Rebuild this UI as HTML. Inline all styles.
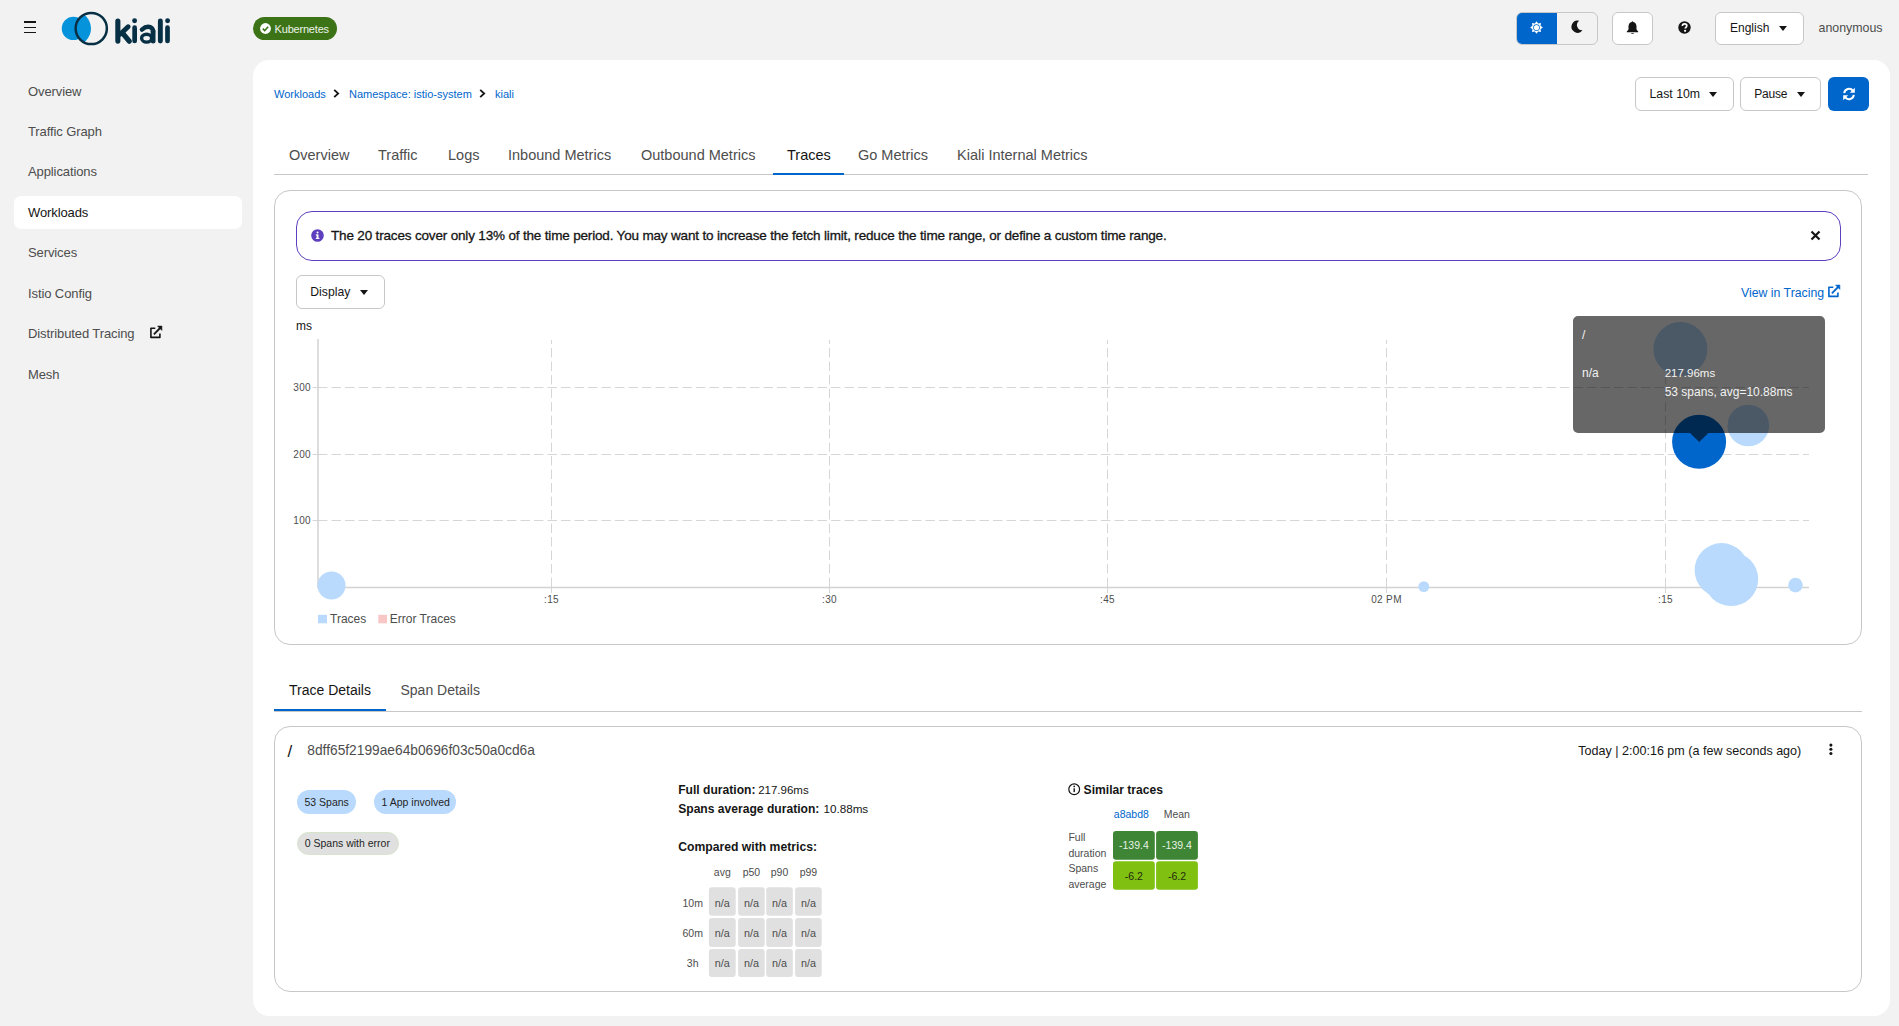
<!DOCTYPE html>
<html><head><meta charset="utf-8">
<style>
*{box-sizing:border-box;margin:0;padding:0}
html,body{width:1899px;height:1026px;overflow:hidden}
body{background:#f2f2f2;font-family:"Liberation Sans",sans-serif;color:#151515;position:relative}
.a{position:absolute;white-space:nowrap}
.nav{position:absolute;left:28px;font-size:13px;color:#4d4d4d;letter-spacing:-0.1px;margin-top:-0.5px}
.panel{position:absolute;left:253px;top:60px;width:1637px;height:956px;background:#fff;border-radius:16px}
.crumb{position:absolute;top:88px;font-size:11px;color:#0066cc}
.chev{position:absolute;top:89px}
.tab{position:absolute;top:146.5px;font-size:14.5px;color:#4d4d4d}
.btn{position:absolute;border:1px solid #c7c7c7;border-radius:6px;background:#fff}
.caret{position:absolute;width:0;height:0;border-left:4.5px solid transparent;border-right:4.5px solid transparent;border-top:5px solid #151515}
</style></head>
<body>
<!-- header -->
<div class="a" style="left:24px;top:21.3px;width:12px;height:1.4px;background:#151515"></div>
<div class="a" style="left:24px;top:26.8px;width:12px;height:1.4px;background:#151515"></div>
<div class="a" style="left:24px;top:31.8px;width:12px;height:1.4px;background:#151515"></div>
<svg class="a" style="left:0;top:0" width="200" height="56" viewBox="0 0 200 56">
  <defs><clipPath id="rc"><circle cx="91.25" cy="28.5" r="15.6"/></clipPath></defs>
  <circle cx="73.4" cy="28.45" r="11.65" fill="#0593dc"/>
  <circle cx="73.7" cy="28.5" r="17.3" fill="#0593dc" clip-path="url(#rc)"/>
  <circle cx="91.25" cy="28.5" r="15.6" fill="none" stroke="#073045" stroke-width="2.5"/>
  <g stroke="#073045" stroke-linecap="round" fill="none">
    <path d="M117.85 21V41.1" stroke-width="5.1"/>
    <path d="M120.2 34.2L128.1 26.8" stroke-width="5"/>
    <path d="M122.6 33.2L129.2 41.2" stroke-width="5.2"/>
    <path d="M134.65 27.7V41" stroke-width="4.7"/>
    <path d="M153.1 31V41.2" stroke-width="4.8"/>
    <path d="M141.9 29.6Q146.5 25.6 150.8 27.4Q153.1 28.6 153.1 32" stroke-width="4.4"/>
    <ellipse cx="146.6" cy="38.2" rx="5" ry="3.9" stroke-width="3.4"/>
    <path d="M160.35 21V41.1" stroke-width="4.9"/>
    <path d="M167.5 27.7V41" stroke-width="4.7"/>
  </g>
  <circle cx="134.6" cy="20.8" r="2.45" fill="#073045"/>
  <circle cx="167.6" cy="20.8" r="2.45" fill="#073045"/>
</svg>
<div class="a" id="k8s" style="left:253px;top:17px;width:84px;height:23px;border-radius:12px;background:#3d7317"></div>
<svg class="a" style="left:259px;top:22px" width="13" height="13" viewBox="0 0 13 13"><circle cx="6.5" cy="6.5" r="5.4" fill="#fff"/><path d="M3.8 6.6 L5.7 8.5 L9.2 4.8" fill="none" stroke="#3d7317" stroke-width="1.6"/></svg>
<div class="a" id="k8stxt" style="left:274.6px;top:22.5px;font-size:11px;color:#eef3ea;letter-spacing:-0.2px">Kubernetes</div>

<!-- theme toggle -->
<div class="a" style="left:1515.5px;top:12px;width:82px;height:33px;border:1px solid #c7c7c7;border-radius:6px;background:#f2f2f2;overflow:hidden">
  <div style="position:absolute;left:-1px;top:-1px;width:41.4px;height:33px;background:#0066cc"></div>
</div>
<div class="btn" style="left:1612px;top:12px;width:41px;height:33px"></div>
<div class="btn" style="left:1715px;top:12px;width:89px;height:33px"></div>
<div class="a" id="eng" style="left:1730px;top:20.5px;font-size:12px">English</div>
<div class="caret" style="left:1779.3px;top:25.6px"></div>
<div class="a" id="anon" style="left:1818.5px;top:20.5px;font-size:12.4px;color:#4d4d4d">anonymous</div>

<!-- sidebar -->
<div class="nav" id="n1" style="top:84px">Overview</div>
<div class="nav" style="top:124px">Traffic Graph</div>
<div class="nav" style="top:164px">Applications</div>
<div class="a" style="left:14px;top:196px;width:228px;height:33px;background:#fff;border-radius:7px"></div>
<div class="nav" style="top:205px;color:#151515">Workloads</div>
<div class="nav" style="top:245px">Services</div>
<div class="nav" style="top:286px">Istio Config</div>
<div class="nav" style="top:326px">Distributed Tracing</div>
<div class="nav" style="top:367px">Mesh</div>

<!-- main panel -->
<div class="panel"></div>
<div class="crumb" id="c1" style="left:274px">Workloads</div>
<div class="crumb" style="left:349px">Namespace: istio-system</div>
<div class="crumb" style="left:495px">kiali</div>

<div class="tab" style="left:289px">Overview</div>
<div class="tab" style="left:378px">Traffic</div>
<div class="tab" style="left:448px">Logs</div>
<div class="tab" style="left:508px">Inbound Metrics</div>
<div class="tab" style="left:641px">Outbound Metrics</div>
<div class="tab" style="left:787px;color:#151515">Traces</div>
<div class="tab" style="left:858px">Go Metrics</div>
<div class="tab" style="left:957px">Kiali Internal Metrics</div>
<div class="a" style="left:274px;top:174px;width:1594px;height:1px;background:#c7c7c7"></div>
<div class="a" style="left:772.5px;top:172.8px;width:71px;height:2.2px;background:#0066cc"></div>

<!-- card -->
<div class="a" style="left:274px;top:190px;width:1588px;height:455px;border:1px solid #c7c7c7;border-radius:16px"></div>


<!-- breadcrumb chevrons -->
<svg class="a" style="left:333px;top:89px" width="7" height="9" viewBox="0 0 7 9"><path d="M1.2 0.8 L5.2 4.5 L1.2 8.2" fill="none" stroke="#151515" stroke-width="1.8"/></svg>
<svg class="a" style="left:479px;top:89px" width="7" height="9" viewBox="0 0 7 9"><path d="M1.2 0.8 L5.2 4.5 L1.2 8.2" fill="none" stroke="#151515" stroke-width="1.8"/></svg>

<!-- right toolbar -->
<div class="btn" style="left:1635px;top:77px;width:99px;height:34px"></div>
<div class="a" id="last" style="left:1649.5px;top:86.5px;font-size:12.3px">Last 10m</div>
<div class="caret" style="left:1709px;top:91.5px"></div>
<div class="btn" style="left:1740px;top:77px;width:81px;height:34px"></div>
<div class="a" id="pause" style="left:1754.3px;top:86.5px;font-size:12px;letter-spacing:-0.2px">Pause</div>
<div class="caret" style="left:1797px;top:91.5px"></div>
<div class="a" style="left:1828px;top:77px;width:41px;height:34px;background:#0066cc;border-radius:6px"></div>

<!-- alert -->
<div class="a" style="left:296px;top:211px;width:1545px;height:50px;border:1px solid #5e40be;border-radius:16px"></div>
<svg class="a" style="left:311px;top:229px" width="13" height="13" viewBox="0 0 13 13"><circle cx="6.5" cy="6.5" r="6.3" fill="#5e40be"/><rect x="5.6" y="5.4" width="1.9" height="4.4" fill="#fff"/><rect x="4.8" y="5.4" width="1.5" height="1.1" fill="#fff"/><rect x="4.8" y="8.9" width="3.6" height="1.1" fill="#fff"/><circle cx="6.55" cy="3.6" r="1" fill="#fff"/></svg>
<div class="a" id="alerttxt" style="left:331px;top:227.5px;font-size:13.5px;letter-spacing:-0.17px;-webkit-text-stroke:0.3px #151515;color:#151515">The 20 traces cover only 13% of the time period. You may want to increase the fetch limit, reduce the time range, or define a custom time range.</div>
<svg class="a" style="left:1810px;top:230px" width="11" height="11" viewBox="0 0 11 11"><path d="M1.5 1.5 L9.5 9.5 M9.5 1.5 L1.5 9.5" stroke="#151515" stroke-width="2.2"/></svg>

<!-- display -->
<div class="btn" style="left:296px;top:275px;width:89px;height:34px"></div>
<div class="a" id="disp" style="left:310.3px;top:285.3px;font-size:12.2px">Display</div>
<div class="caret" style="left:360px;top:290px"></div>
<div class="a" id="vit" style="left:1741px;top:285.5px;font-size:12.3px;color:#0066cc">View in Tracing</div>

<!-- chart -->
<svg class="a" style="left:0;top:0" width="1899" height="700" viewBox="0 0 1899 700">
  <g stroke="#d6d6d6" stroke-width="1" stroke-dasharray="9.4,4.1" fill="none">
    <path d="M318 387.5H1809M318 454.5H1809M318 520.5H1809"/>
    <path d="M551.5 587V340M829.5 587V340M1107.5 587V340M1386.5 587V340M1665.5 587V340"/>
  </g>
  <g stroke="#d6d6d6" stroke-width="1" fill="none">
    <path d="M551.5 587V593M829.5 587V593M1107.5 587V593M1386.5 587V593M1665.5 587V593"/>
    <path d="M312.5 387.5H318M312.5 454.5H318M312.5 520.5H318"/>
  </g>
  <g stroke="#d2d2d2" stroke-width="1.5" fill="none">
    <path d="M318 339V587.5H1809"/>
  </g>
  <g font-family="Liberation Sans" font-size="10" letter-spacing="0.35" fill="#4d4d4d">
    <text x="311" y="391" text-anchor="end">300</text>
    <text x="311" y="458" text-anchor="end">200</text>
    <text x="311" y="524" text-anchor="end">100</text>
    <text x="551.5" y="603" text-anchor="middle">:15</text>
    <text x="829.5" y="603" text-anchor="middle">:30</text>
    <text x="1107.5" y="603" text-anchor="middle">:45</text>
    <text x="1386.5" y="603" text-anchor="middle">02 PM</text>
    <text x="1665.5" y="603" text-anchor="middle">:15</text>
  </g>
  <text x="296" y="329.5" font-family="Liberation Sans" font-size="12" fill="#151515">ms</text>
  <g fill="#b9dafc">
    <circle cx="331.5" cy="585.5" r="14"/>
    <circle cx="1423.8" cy="586.6" r="5.4"/>
    <circle cx="1721.6" cy="570.1" r="27"/>
    <circle cx="1731.2" cy="579.1" r="27"/>
    <circle cx="1795.5" cy="585.1" r="7.3"/>
    <circle cx="1680.4" cy="349" r="27"/>
    <circle cx="1748.3" cy="425.5" r="20.8"/>
  </g>
  <circle cx="1699.1" cy="441.8" r="27" fill="#0066cc"/>
  <rect x="318" y="614.8" width="9" height="8.5" fill="#b9dafc"/>
  <rect x="378.3" y="614.8" width="8.7" height="8.5" fill="#f9c6c6"/>
  <g font-family="Liberation Sans" font-size="12" fill="#4d4d4d">
    <text x="330" y="623.3">Traces</text>
    <text x="389.8" y="623.3">Error Traces</text>
  </g>
  <path d="M1578 316H1820A5 5 0 0 1 1825 321V428A5 5 0 0 1 1820 433H1708.4L1699.2 441.9L1690 433H1578A5 5 0 0 1 1573 428V321A5 5 0 0 1 1578 316Z" fill="#000" fill-opacity="0.595"/>
  <g font-family="Liberation Sans" font-size="12" fill="#f2f2f2">
    <text x="1582" y="339">/</text>
    <text x="1582" y="376.6">n/a</text>
    <text x="1664.7" y="376.6" font-size="11.5">217.96ms</text>
    <text x="1664.7" y="395.6">53 spans, avg=10.88ms</text>
  </g>
</svg>

<!-- bottom tabs -->
<div class="a" id="td" style="left:289px;top:682px;font-size:14px;color:#151515">Trace Details</div>
<div class="a" id="sd" style="left:400.5px;top:682px;font-size:14px;color:#4d4d4d">Span Details</div>
<div class="a" style="left:274px;top:711px;width:1588px;height:1px;background:#c7c7c7"></div>
<div class="a" style="left:274px;top:708.7px;width:112px;height:2.3px;background:#0066cc"></div>

<!-- trace card -->
<div class="a" style="left:274px;top:726px;width:1588px;height:266px;border:1px solid #c7c7c7;border-radius:16px"></div>
<div class="a" style="left:297px;top:790px;width:59px;height:24px;border-radius:12px;background:#b9dafc"></div>
<div class="a" style="left:374px;top:790px;width:82px;height:24px;border-radius:12px;background:#b9dafc"></div>
<div class="a" style="left:297px;top:832px;width:102px;height:23px;border-radius:12px;background:#e0e0e0;border:1px solid #d6e4cc"></div>
<svg class="a" style="left:0;top:700px" width="1899" height="300" viewBox="0 700 1899 300">
<text x="287.5" y="757" font-family="Liberation Sans" font-size="17" fill="#151515">/</text>
<text x="307.3" y="755.4" font-family="Liberation Sans" font-size="13.75" fill="#4d4d4d">8dff65f2199ae64b0696f03c50a0cd6a</text>
<text x="1578.3" y="755.2" font-family="Liberation Sans" font-size="12.55" fill="#151515">Today | 2:00:16 pm (a few seconds ago)</text>
<circle cx="1830.9" cy="745.1" r="1.55" fill="#151515"/><circle cx="1830.9" cy="749.3" r="1.55" fill="#151515"/><circle cx="1830.9" cy="753.5" r="1.55" fill="#151515"/>
<g font-family="Liberation Sans" font-size="10.5" fill="#1f1f1f"><text x="304.5" y="806.3">53 Spans</text><text x="381.6" y="806.3">1 App involved</text><text x="304.7" y="847">0 Spans with error</text></g>
<g font-family="Liberation Sans" fill="#151515"><text x="678.2" y="794" font-size="12.1" font-weight="bold">Full duration:</text><text x="758.2" y="794" font-size="11.5">217.96ms</text>
<text x="678.2" y="812.9" font-size="12.1" font-weight="bold">Spans average duration:</text><text x="823.4" y="812.9" font-size="11.7">10.88ms</text>
<text x="678.2" y="851.1" font-size="12.2" font-weight="bold">Compared with metrics:</text></g>
<g font-family="Liberation Sans" font-size="10.5" fill="#4d4d4d" text-anchor="middle">
<text x="722.3" y="875.7">avg</text>
<text x="751.4" y="875.7">p50</text>
<text x="779.5" y="875.7">p90</text>
<text x="808.4" y="875.7">p99</text>
<text x="692.7" y="906.6">10m</text>
<text x="692.7" y="936.6">60m</text>
<text x="692.7" y="967.3">3h</text>
</g>
<rect x="708.9" y="887.3" width="26.8" height="28.5" rx="3" fill="#e0e0e0"/>
<rect x="738.1" y="887.3" width="26.6" height="28.5" rx="3" fill="#e0e0e0"/>
<rect x="766.2" y="887.3" width="26.6" height="28.5" rx="3" fill="#e0e0e0"/>
<rect x="795.1" y="887.3" width="26.6" height="28.5" rx="3" fill="#e0e0e0"/>
<rect x="708.9" y="918" width="26.8" height="29.0" rx="3" fill="#e0e0e0"/>
<rect x="738.1" y="918" width="26.6" height="29.0" rx="3" fill="#e0e0e0"/>
<rect x="766.2" y="918" width="26.6" height="29.0" rx="3" fill="#e0e0e0"/>
<rect x="795.1" y="918" width="26.6" height="29.0" rx="3" fill="#e0e0e0"/>
<rect x="708.9" y="949.1" width="26.8" height="27.9" rx="3" fill="#e0e0e0"/>
<rect x="738.1" y="949.1" width="26.6" height="27.9" rx="3" fill="#e0e0e0"/>
<rect x="766.2" y="949.1" width="26.6" height="27.9" rx="3" fill="#e0e0e0"/>
<rect x="795.1" y="949.1" width="26.6" height="27.9" rx="3" fill="#e0e0e0"/>
<g font-family="Liberation Sans" font-size="10.8" fill="#4d4d4d" text-anchor="middle">
<text x="722.3" y="906.6">n/a</text>
<text x="751.4" y="906.6">n/a</text>
<text x="779.5" y="906.6">n/a</text>
<text x="808.4" y="906.6">n/a</text>
<text x="722.3" y="936.6">n/a</text>
<text x="751.4" y="936.6">n/a</text>
<text x="779.5" y="936.6">n/a</text>
<text x="808.4" y="936.6">n/a</text>
<text x="722.3" y="967.3">n/a</text>
<text x="751.4" y="967.3">n/a</text>
<text x="779.5" y="967.3">n/a</text>
<text x="808.4" y="967.3">n/a</text>
</g>
<circle cx="1074.2" cy="789.3" r="5.4" fill="none" stroke="#151515" stroke-width="1.2"/><rect x="1073.5" y="788.3" width="1.4" height="3.8" fill="#151515"/><circle cx="1074.2" cy="786.4" r="0.85" fill="#151515"/>
<text x="1083.6" y="794.1" font-family="Liberation Sans" font-size="12.1" font-weight="bold" fill="#151515">Similar traces</text>
<g font-family="Liberation Sans" font-size="10.5"><text x="1113.8" y="818.2" fill="#0066cc">a8abd8</text><text x="1163.7" y="818.2" fill="#4d4d4d">Mean</text></g>
<g font-family="Liberation Sans" font-size="10.5" fill="#4d4d4d"><text x="1068.4" y="841">Full</text><text x="1068.4" y="857.2">duration</text><text x="1068.4" y="872">Spans</text><text x="1068.4" y="887.9">average</text></g>
<rect x="1113" y="831.1" width="41.8" height="28.6" rx="3" fill="#3e8635"/><rect x="1156.1" y="831.1" width="41.8" height="28.6" rx="3" fill="#3e8635"/>
<rect x="1113" y="861.3" width="41.8" height="28.5" rx="3" fill="#7fc010"/><rect x="1156.1" y="861.3" width="41.8" height="28.5" rx="3" fill="#7fc010"/>
<g font-family="Liberation Sans" font-size="10.5" text-anchor="middle"><text x="1133.9" y="849.2" fill="#e8f0e5">-139.4</text><text x="1177" y="849.2" fill="#e8f0e5">-139.4</text><text x="1133.9" y="879.6" fill="#1f2a10">-6.2</text><text x="1177" y="879.6" fill="#1f2a10">-6.2</text></g>
</svg>

<!-- sidebar external icon -->
<svg class="a" style="left:149px;top:325px" width="14" height="14" viewBox="0 0 14 14"><path d="M6.3 3.3H1.9V12.4H10.9V8.5" fill="none" stroke="#151515" stroke-width="1.6" stroke-linejoin="round"/><path d="M8.6 1.1H12.9V5.4Z" fill="#151515" stroke="#151515" stroke-width="0.6" stroke-linejoin="round"/><path d="M4.9 9.4L11.6 2.5" stroke="#151515" stroke-width="1.8"/></svg>
<svg class="a" style="left:1826.8px;top:283.6px" width="14" height="14" viewBox="0 0 14 14"><path d="M6.3 3.3H1.9V12.4H10.9V8.5" fill="none" stroke="#0066cc" stroke-width="1.6" stroke-linejoin="round"/><path d="M8.6 1.1H12.9V5.4Z" fill="#0066cc" stroke="#0066cc" stroke-width="0.6" stroke-linejoin="round"/><path d="M4.9 9.4L11.6 2.5" stroke="#0066cc" stroke-width="1.8"/></svg>

<!-- header icons -->
<svg class="a" style="left:1530px;top:20.6px" width="13" height="13" viewBox="0 0 13 13"><polygon points="6.50,0.20 4.82,2.43 2.05,2.05 2.43,4.82 0.20,6.50 2.43,8.18 2.05,10.95 4.82,10.57 6.50,12.80 8.18,10.57 10.95,10.95 10.57,8.18 12.80,6.50 10.57,4.82 10.95,2.05 8.18,2.43" fill="#fff"/><circle cx="6.5" cy="6.5" r="3.35" fill="#0066cc"/><circle cx="6.5" cy="6.5" r="2.6" fill="#fff"/></svg>
<svg class="a" style="left:1571px;top:19.9px" width="13" height="14" viewBox="0 0 13 14"><path d="M8.2 0.7A6.1 6.1 0 1 0 11.5 10.3A5.29 5.29 0 0 1 8.2 0.7Z" fill="#151515"/></svg>
<svg class="a" style="left:1626px;top:20.5px" width="13" height="14" viewBox="0 0 13 14"><path d="M6.5 0.3 C6 0.3 5.8 0.7 5.8 1.1 C3.6 1.5 2.5 3.3 2.5 5.6 L2.5 8.6 L0.8 10.6 L0.8 11.2 L12.2 11.2 L12.2 10.6 L10.5 8.6 L10.5 5.6 C10.5 3.3 9.4 1.5 7.2 1.1 C7.2 0.7 7 0.3 6.5 0.3Z" fill="#151515"/><path d="M5 12 A1.6 1.3 0 0 0 8 12Z" fill="#151515"/></svg>
<svg class="a" style="left:1677.5px;top:20.5px" width="13" height="13" viewBox="0 0 13 13"><circle cx="6.5" cy="6.5" r="6.2" fill="#151515"/><path d="M4.4 5 C4.4 3.6 5.3 2.9 6.6 2.9 C7.9 2.9 8.8 3.7 8.8 4.8 C8.8 6.2 7.2 6.4 7.2 7.6" fill="none" stroke="#fff" stroke-width="1.7"/><circle cx="7.1" cy="9.8" r="1.1" fill="#fff"/></svg>
<svg class="a" style="left:1841.5px;top:87px" width="14" height="14" viewBox="0 0 14 14"><path d="M2.2 6.2 A4.9 4.9 0 0 1 11 3.8" fill="none" stroke="#fff" stroke-width="2"/><path d="M12.8 0.8 L12.8 5.8 L7.8 5.8Z" fill="#fff"/><path d="M11.8 7.8 A4.9 4.9 0 0 1 3 10.2" fill="none" stroke="#fff" stroke-width="2"/><path d="M1.2 13.2 L1.2 8.2 L6.2 8.2Z" fill="#fff"/></svg>
</body></html>
